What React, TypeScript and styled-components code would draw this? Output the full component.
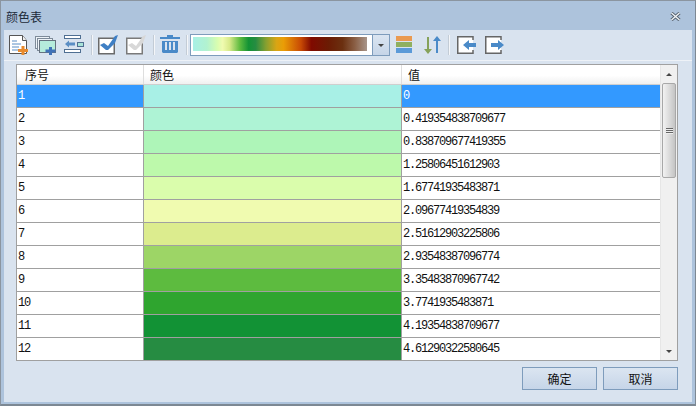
import React from 'react';
import styled, { createGlobalStyle } from 'styled-components';

const GlobalStyle = createGlobalStyle`
  html, body { margin: 0; padding: 0; background: #fff; }
  body { font-family: "Noto Sans CJK SC", "Liberation Sans", sans-serif; font-size: 12px; color: #111; }
`;

const Dialog = styled.div`
  box-sizing: border-box;
  width: 696px;
  height: 406px;
  display: flex;
  flex-direction: column;
  background: #adc3dc;
  border: 1px solid #8b95a0;
  border-right-color: #7d8893;
  border-bottom: 2px solid #7d8893;
  padding: 0 3px 2px 3px;
`;

const TitleBar = styled.div`
  height: 29px;
  flex-shrink: 0;
  box-sizing: border-box;
  display: flex;
  align-items: center;
  justify-content: space-between;
  padding: 2px 11px 0 2px;
  font-size: 12px;
  color: #1c2a38;
`;

const CloseIcon = styled.svg`
  width: 11px;
  height: 9px;
  margin-top: -1px;
`;

const Body = styled.div`
  flex: 1;
  display: flex;
  flex-direction: column;
  background: #d9e3ef;
`;

const Toolbar = styled.div`
  height: 31px;
  flex-shrink: 0;
  box-sizing: border-box;
  display: flex;
  align-items: center;
  padding-left: 5px;
  border-bottom: 1px solid #eef2f7;
`;

const ToolIcon = styled.svg<{ $left?: number }>`
  height: 20px;
  flex-shrink: 0;
  margin-left: ${p => p.$left ?? 0}px;
`;

const Separator = styled.div<{ $left: number }>`
  width: 2px;
  height: 20px;
  margin-left: ${p => p.$left}px;
  background: #c3ccd6;
  border-right: 1px solid #f4f6f9;
  box-sizing: border-box;
`;

const RampSelect = styled.div`
  box-sizing: border-box;
  width: 200px;
  height: 22px;
  margin-left: 2px;
  display: flex;
  border: 1px solid #7e9cbc;
  background: #fff;
`;

const RampTrack = styled.div`
  flex: 1;
  padding: 2px 5px 4px 2px;
  display: flex;
`;

const Ramp = styled.div`
  flex: 1;
  background: linear-gradient(
    90deg,
    #a8f0e6 0%, #b2f2d0 8%, #d8fdb0 14%, #f0fbb0 17%, #d8ea8a 21%, #5dbb3f 27%, #129235 32%, #268c42 36%,
    #87a030 42%, #d9a514 48%, #ea9d06 52%, #c84a04 62%, #800a00 68%, #6b1c04 78%, #6b3010 86%, #8a5f45 93%, #a8958a 100%
  );
`;

const RampArrow = styled.div`
  box-sizing: border-box;
  width: 17px;
  display: flex;
  align-items: center;
  justify-content: center;
  background: linear-gradient(#dbe5f1, #c6d5e8);
  border-left: 1px solid #7e9cbc;
`;

const Caret = styled.div`
  width: 0;
  height: 0;
  border-left: 3px solid transparent;
  border-right: 3px solid transparent;
  border-top: 3px solid #444;
`;

const TableArea = styled.div`
  flex: 1;
  display: flex;
  flex-direction: column;
  padding: 3px 14px 5px 12px;
`;

const TableFrame = styled.div`
  box-sizing: border-box;
  height: 297px;
  display: flex;
  border: 1px solid #a0a0a0;
  background: #fff;
`;

const Grid = styled.div`
  flex: 1;
  display: flex;
  flex-direction: column;
  min-width: 0;
`;

const HeadRow = styled.div`
  height: 20px;
  flex-shrink: 0;
  box-sizing: border-box;
  display: grid;
  grid-template-columns: 127px 258px 1fr;
  background: linear-gradient(#fff 0%, #fff 55%, #f0f0f0 100%);
  border-bottom: 1px solid #cfcfcf;
`;

const HeadCell = styled.div<{ $left: number }>`
  padding-left: ${p => p.$left}px;
  line-height: 19px;
  border-right: 1px solid #dedede;
  &:last-child { border-right: 0; }
`;

const Row = styled.div`
  height: 23px;
  flex-shrink: 0;
  box-sizing: border-box;
  display: grid;
  grid-template-columns: 127px 258px 1fr;
  border-bottom: 1px solid #a0a0a0;
  background: #fff;
  &:last-child { height: 22px; border-bottom: 0; }
`;

const Cell = styled.div<{ $selected?: boolean }>`
  font-family: "Liberation Mono", monospace;
  font-size: 12px;
  letter-spacing: -1.2px;
  line-height: 22px;
  padding-left: 1px;
  color: ${p => (p.$selected ? '#fff' : '#111')};
  background: ${p => (p.$selected ? '#3399ff' : 'transparent')};
  border-right: 1px solid #a0a0a0;
  &:last-child { border-right: 0; }
`;

const Swatch = styled.div<{ $color: string }>`
  background: ${p => p.$color};
  border-right: 1px solid #a0a0a0;
`;

const ScrollBar = styled.div`
  width: 16px;
  flex-shrink: 0;
  display: flex;
  flex-direction: column;
  background: #f0f0f0;
  border-left: 1px solid #e6e6e6;
`;

const ScrollArrow = styled.div<{ $up?: boolean }>`
  height: 18px;
  flex-shrink: 0;
  display: flex;
  align-items: center;
  justify-content: center;
  margin-top: ${p => (p.$up ? '0' : 'auto')};
  &::after {
    content: '';
    width: 0;
    height: 0;
    border-left: 3px solid transparent;
    border-right: 3px solid transparent;
    ${p => (p.$up ? 'border-bottom: 3px solid #444;' : 'border-top: 3px solid #444;')}
  }
`;

const ScrollThumb = styled.div`
  box-sizing: border-box;
  height: 95px;
  margin-left: 1px;
  width: 14px;
  display: flex;
  flex-direction: column;
  align-items: center;
  justify-content: center;
  gap: 1px;
  border: 1px solid #a8a8a8;
  border-radius: 2px;
  background: linear-gradient(90deg, #f2f2f2, #dcdcdc 50%, #c4c4c4);
`;

const Grip = styled.div`
  width: 7px;
  height: 1px;
  background: #666;
  box-shadow: 0 1px 0 #eee;
`;

const Footer = styled.div`
  display: flex;
  justify-content: flex-end;
  gap: 6px;
  margin-top: 6px;
`;

const Button = styled.button`
  box-sizing: border-box;
  width: 75px;
  height: 23px;
  padding: 0;
  font-family: inherit;
  font-size: 12px;
  color: #111;
  border: 1px solid #7e9cbc;
  background: linear-gradient(#dbe5f1, #c6d5e8);
`;

const rows = [
  ['1', '#a8f0e6', '0'],
  ['2', '#aef3d5', '0.419354838709677'],
  ['3', '#aef5b8', '0.838709677419355'],
  ['4', '#bdf9ab', '1.25806451612903'],
  ['5', '#dafdac', '1.67741935483871'],
  ['6', '#f0fbb0', '2.09677419354839'],
  ['7', '#dcec8e', '2.51612903225806'],
  ['8', '#9dd566', '2.93548387096774'],
  ['9', '#5dbb3f', '3.35483870967742'],
  ['10', '#2fa52f', '3.7741935483871'],
  ['11', '#129235', '4.19354838709677'],
  ['12', '#268c42', '4.61290322580645'],
];

const checkMark = 'M2 10l4-2 4 3 7-10 3-1-3 8-7 7H8z';

function App() {
  return (
    <>
      <GlobalStyle />
      <Dialog>
        <TitleBar>
          颜色表
          <CloseIcon viewBox="0 0 11 9">
            <path d="M1.500 1l8 7M9.500 1l-8 7" stroke="#56636f" strokeWidth="3.200" />
            <path d="M1.500 1l8 7M9.500 1l-8 7" stroke="#f2f5f8" strokeWidth="1.300" />
          </CloseIcon>
        </TitleBar>
        <Body>
          <Toolbar>
            <ToolIcon width="20" viewBox="0 0 20 20">
              <path d="M.5.500h13l4 5v13H.5z" fill="#fff" stroke="#555" />
              <path d="M13.500.500v5h4" fill="#eee" stroke="#555" />
              <path d="M3 6h5M3 9h9M3 12h7M3 15h6" stroke="#5b8ec4" />
              <path d="M12.500 11h3v3h3.500v3h-3.500v3h-3v-3H9v-3h3.500z" fill="#e88a2c" />
            </ToolIcon>
            <ToolIcon width="21" $left={6} viewBox="0 0 21 20">
              <rect x=".5" y="1.500" width="14" height="12" fill="#eef3f8" stroke="#7e8b99" />
              <rect x="2.500" y="3.500" width="15" height="12" fill="#eef3f8" stroke="#7e8b99" />
              <rect x="4.500" y="5.500" width="16" height="12" fill="#b6ecdc" stroke="#66727f" />
              <path d="M14 12h3v2.500h3.500v3H17V20h-3v-2.500h-3.500v-3H14z" fill="#3f72b8" />
            </ToolIcon>
            <ToolIcon width="20" $left={8} viewBox="0 0 20 20">
              <rect x=".5" y=".5" width="16" height="3" fill="#fff" stroke="#4f6f92" />
              <rect x=".5" y="14.500" width="16" height="3" fill="#fff" stroke="#4f6f92" />
              <path d="M1 9l4-3.500v2h6v3H5v2z" fill="#5b8ec4" />
              <rect x="13.500" y="7.500" width="6" height="4" fill="#a8e4d8" stroke="#4f6f92" />
            </ToolIcon>
            <Separator $left={7} />
            <ToolIcon width="20" $left={5} viewBox="0 0 20 20">
              <rect x=".75" y="3.250" width="15.500" height="15.500" fill="#fff" stroke="#6a6a6a" strokeWidth="1.500" />
              <path d={checkMark} fill="#3f7fc4" />
            </ToolIcon>
            <ToolIcon width="20" $left={8} viewBox="0 0 20 20">
              <rect x=".75" y="3.250" width="15.500" height="15.500" fill="#fff" stroke="#7a7a7a" strokeWidth="1.500" />
              <path d={checkMark} fill="#d8d8d8" />
            </ToolIcon>
            <Separator $left={7} />
            <ToolIcon width="20" $left={5} viewBox="0 0 20 20">
              <path d="M0 2h20v2H0zM7 0h6v2H7z" fill="#4a8ac8" />
              <path d="M2 6h16v11l-1 1H3l-1-1zM5 7v8h2V7zM9 7v8h2V7zM13 7v8h2V7z" fill="#4a8ac8" fillRule="evenodd" />
            </ToolIcon>
            <Separator $left={6} />
            <RampSelect>
              <RampTrack><Ramp /></RampTrack>
              <RampArrow><Caret /></RampArrow>
            </RampSelect>
            <ToolIcon width="16" $left={6} viewBox="0 0 16 20">
              <rect y="1" width="16" height="5" fill="#ea9a50" />
              <rect y="7" width="16" height="5" fill="#8fb060" />
              <rect y="13" width="16" height="5" fill="#5b9ad8" />
            </ToolIcon>
            <ToolIcon width="18" $left={11} viewBox="0 0 18 20">
              <path d="M4 2h2v12h3l-4 5-4-5h3z" fill="#86a25a" />
              <path d="M13 18V6h-3l4-5 4 5h-3v12z" fill="#4a8ac8" />
            </ToolIcon>
            <Separator $left={7} />
            <ToolIcon width="20" $left={7} viewBox="0 0 20 20">
              <path d="M16 5V1.750H.75v16.500H16V15" fill="#fff" stroke="#666" strokeWidth="1.500" />
              <path d="M19 8h-7V5l-6 5 6 5v-3h7z" fill="#4a8ac8" />
            </ToolIcon>
            <ToolIcon width="20" $left={8} viewBox="0 0 20 20">
              <path d="M16 5V1.750H.75v16.500H16V15" fill="#fff" stroke="#666" strokeWidth="1.500" />
              <path d="M6 8h7V5l6 5-6 5v-3H6z" fill="#4a8ac8" />
            </ToolIcon>
          </Toolbar>
          <TableArea>
            <TableFrame>
              <Grid>
                <HeadRow>
                  <HeadCell $left={8}>序号</HeadCell>
                  <HeadCell $left={6}>颜色</HeadCell>
                  <HeadCell $left={6}>值</HeadCell>
                </HeadRow>
                {rows.map(([id, color, value], i) => (
                  <Row key={id}>
                    <Cell $selected={i === 0}>{id}</Cell>
                    <Swatch $color={color} />
                    <Cell $selected={i === 0}>{value}</Cell>
                  </Row>
                ))}
              </Grid>
              <ScrollBar>
                <ScrollArrow $up />
                <ScrollThumb><Grip /><Grip /><Grip /></ScrollThumb>
                <ScrollArrow />
              </ScrollBar>
            </TableFrame>
            <Footer>
              <Button>确定</Button>
              <Button>取消</Button>
            </Footer>
          </TableArea>
        </Body>
      </Dialog>
    </>
  );
}

export default App;
